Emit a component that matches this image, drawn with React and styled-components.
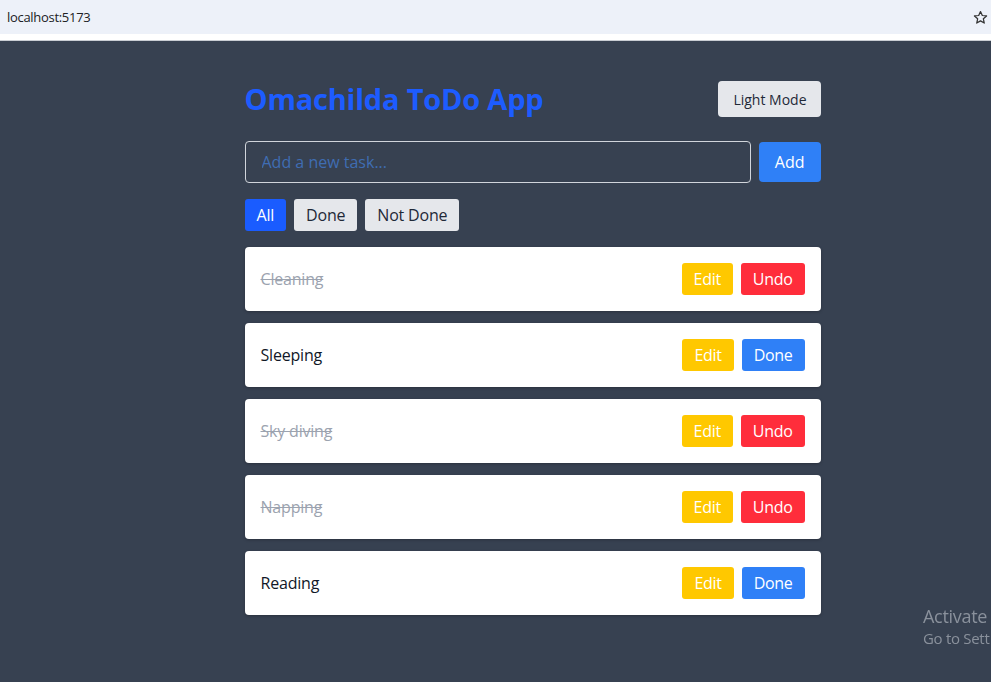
import React, { useState } from "react";
import styled, { createGlobalStyle } from "styled-components";

const GlobalStyle = createGlobalStyle`
  html, body {
    margin: 0;
    padding: 0;
    height: 100%;
  }
  body {
    font-family: "Segoe UI", "Open Sans", "Noto Sans", sans-serif;
    background: #374151;
  }
  * { box-sizing: border-box; }
`;

const initialTodos = [
  { id: 1, text: "Cleaning", done: true },
  { id: 2, text: "Sleeping", done: false },
  { id: 3, text: "Sky diving", done: true },
  { id: 4, text: "Napping", done: true },
  { id: 5, text: "Reading", done: false },
];

function App() {
  const [todos] = useState(initialTodos);
  return (
    <>
      <GlobalStyle />
      <BrowserBar>
        <Url>localhost:5173</Url>
        <svg width="15" height="15" viewBox="0 0 24 24" fill="none" stroke="#333" strokeWidth="2" strokeLinejoin="round">
          <path d="M12 2.5l2.9 6.3 6.8.7-5.1 4.6 1.4 6.8L12 17.4l-6 3.5 1.4-6.8-5.1-4.6 6.8-.7z" />
        </svg>
      </BrowserBar>
      <BarGap />
      <Page>
        <Container>
          <Header>
            <Title>Omachilda ToDo App</Title>
            <ModeButton>Light Mode</ModeButton>
          </Header>
          <AddRow>
            <TaskInput placeholder="Add a new task..." />
            <AddButton>Add</AddButton>
          </AddRow>
          <Filters>
            <FilterButton $active>All</FilterButton>
            <FilterButton>Done</FilterButton>
            <FilterButton>Not Done</FilterButton>
          </Filters>
          <List>
            {todos.map((t) => (
              <Card key={t.id}>
                <TaskText $done={t.done}>{t.text}</TaskText>
                <Actions>
                  <ActionButton $variant="edit">Edit</ActionButton>
                  <ActionButton $variant={t.done ? "undo" : "done"}>
                    {t.done ? "Undo" : "Done"}
                  </ActionButton>
                </Actions>
              </Card>
            ))}
          </List>
        </Container>
      </Page>
      <Watermark>
        <WatermarkTitle>Activate</WatermarkTitle>
        <WatermarkSub>Go to Sett</WatermarkSub>
      </Watermark>
    </>
  );
}

export default App;

const BrowserBar = styled.div`
  height: 34px;
  background: #edf1f9;
  display: flex;
  align-items: center;
  justify-content: space-between;
  padding: 0 3px 0 7px;
`;

const Url = styled.span`
  font-family: "Segoe UI", "Open Sans", sans-serif;
  font-size: 13px;
  color: #202124;
  letter-spacing: -0.3px;
`;

const BarGap = styled.div`
  height: 7px;
  background: #fff;
  border-bottom: 1px solid #c9cdd3;
`;

const Page = styled.main`
  min-height: calc(100vh - 41px);
  background: #374151;
  padding-top: 40px;
`;

const Container = styled.div`
  width: 576px;
  margin: 0 auto;
  position: relative;
  left: 37px;
`;

const Header = styled.div`
  display: flex;
  justify-content: space-between;
  align-items: center;
  margin-bottom: 24px;
`;

const Title = styled.h1`
  margin: 0;
  font-size: 29px;
  line-height: 36px;
  letter-spacing: -0.2px;
  font-weight: 700;
  color: #1d5cff;
`;

const ModeButton = styled.button`
  height: 36px;
  padding: 0 14px 0 15px;
  border: none;
  border-radius: 4px;
  background: #e5e7eb;
  color: #1f2937;
  font-family: inherit;
  font-size: 14px;
`;

const AddRow = styled.div`
  display: flex;
  align-items: center;
  gap: 8px;
  margin-bottom: 16px;
`;

const TaskInput = styled.input`
  flex: 1;
  height: 42px;
  padding: 0 16px;
  border: 1px solid #d1d5db;
  border-radius: 4px;
  background: transparent;
  font-family: inherit;
  font-size: 16px;
  color: #fff;
  &::placeholder {
    color: #3f6db3;
  }
`;

const AddButton = styled.button`
  height: 40px;
  padding: 0 16px;
  border: none;
  border-radius: 4px;
  background: #2f80f7;
  color: #fff;
  font-family: inherit;
  font-size: 16px;
`;

const Filters = styled.div`
  display: flex;
  gap: 8px;
  margin-bottom: 16px;
`;

const FilterButton = styled.button`
  height: 32px;
  padding: 0 12px;
  border: none;
  border-radius: 3px;
  background: ${(p) => (p.$active ? "#1a5cff" : "#e5e7eb")};
  color: ${(p) => (p.$active ? "#fff" : "#1f2937")};
  font-family: inherit;
  font-size: 16px;
  letter-spacing: -0.2px;
`;

const List = styled.ul`
  list-style: none;
  margin: 0;
  padding: 0;
  display: flex;
  flex-direction: column;
  gap: 12px;
`;

const Card = styled.li`
  height: 64px;
  padding: 0 16px;
  background: #fff;
  border-radius: 4px;
  box-shadow: 0 1px 3px rgba(0, 0, 0, 0.25);
  display: flex;
  align-items: center;
  justify-content: space-between;
`;

const TaskText = styled.span`
  font-size: 16px;
  letter-spacing: -0.2px;
  color: ${(p) => (p.$done ? "#9ca3af" : "#111827")};
  text-decoration: ${(p) => (p.$done ? "line-through" : "none")};
`;

const Actions = styled.div`
  display: flex;
  gap: 8px;
`;

const variantColors = {
  edit: "#ffc800",
  undo: "#ff2d3b",
  done: "#2f80f7",
};

const ActionButton = styled.button`
  height: 32px;
  padding: 0 12px;
  border: none;
  border-radius: 3px;
  background: ${(p) => variantColors[p.$variant]};
  color: #fff;
  font-family: inherit;
  font-size: 16px;
  letter-spacing: -0.3px;
`;

const Watermark = styled.div`
  position: fixed;
  left: 923px;
  top: 603px;
  white-space: nowrap;
  color: #8a919c;
  font-family: "Segoe UI", "Open Sans", sans-serif;
`;

const WatermarkTitle = styled.div`
  font-size: 18px;
  line-height: 26px;
  letter-spacing: -0.3px;
`;

const WatermarkSub = styled.div`
  font-size: 15px;
  line-height: 19px;
  letter-spacing: -0.3px;
`;
